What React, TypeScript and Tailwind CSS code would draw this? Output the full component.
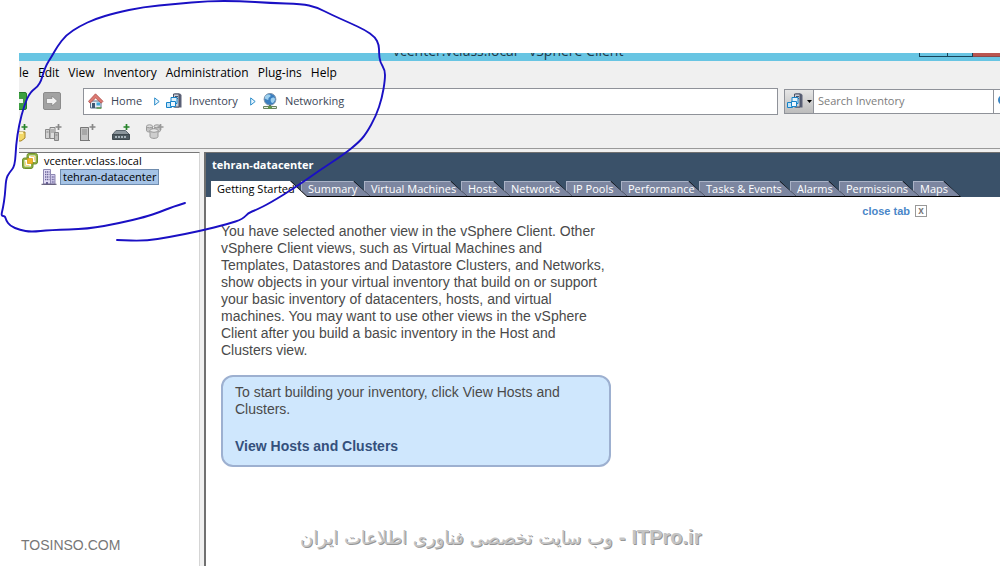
import { useState } from "react";

const menuItems = ["Edit", "View", "Inventory", "Administration", "Plug-ins", "Help"];

const tabs = [
  { label: "Getting Started", width: "w-[97px]" },
  { label: "Summary", width: "w-[70px]" },
  { label: "Virtual Machines", width: "w-[104px]" },
  { label: "Hosts", width: "w-[50px]" },
  { label: "Networks", width: "w-[69px]" },
  { label: "IP Pools", width: "w-[62px]" },
  { label: "Performance", width: "w-[85px]" },
  { label: "Tasks & Events", width: "w-[98px]" },
  { label: "Alarms", width: "w-[56px]" },
  { label: "Permissions", width: "w-[81px]" },
  { label: "Maps", width: "w-[48px]" },
];

function HomeIcon() {
  return (
    <svg className="h-4 w-4 shrink-0" viewBox="0 0 16 16">
      <path d="M2.500 8h10.500v7H2.500z" fill="#e6edf5" stroke="#56718f" />
      <path d="M7.500 .8 15 8.300l-1.800 1.900L7.700 5 2 10.200.5 8.300z" fill="#dc7a72" stroke="#b0524e" strokeWidth=".8" />
      <path d="M4 10h3v5H4z" fill="#3f5874" />
      <path d="M8.500 9.500h3.500v3H8.500z" fill="#3fa9dd" />
      <path d="M8.500 15h5" stroke="#5d9a4a" strokeWidth="1.500" />
    </svg>
  );
}

function InventoryIcon() {
  return (
    <svg className="h-4 w-4 shrink-0" viewBox="0 0 16 16">
      <path d="M8.500.5H14L15.500 2v12.500h-7z" fill="#5a6076" />
      <path d="M7.500 1H13v13H7.500z" fill="#c9ced8" stroke="#4b5266" />
      <path d="M9 3.500h3M9 5.500h3" stroke="#4b5266" />
      <path d="M5 4.500h6v6H5z" fill="#dff1fc" stroke="#1683c9" />
      <path d="M.5 9.500h5v5h-5z" fill="#bfe3f9" stroke="#1683c9" />
      <path d="M4.500 8.500h5v5h-5z" fill="#eef8ff" stroke="#1683c9" />
    </svg>
  );
}

function NetworkIcon() {
  return (
    <svg className="h-4 w-4 shrink-0" viewBox="0 0 16 16">
      <circle cx="8" cy="6.300" r="5.900" fill="#3b7fc0" stroke="#8195ab" />
      <path d="M3 3.500C5 1 8 1.200 8.500 2.500S6 4.500 6.500 6 4 6.500 3 5.500zM9 5.500c2-1.500 4-1 4 .8S11 10.500 10 10 8 7 9 5.500z" fill="#9dd0ef" />
      <path d="M8 12v2" stroke="#63735b" strokeWidth="2" />
      <path d="M1.500 13.500h13v2h-13z" fill="#e4eedd" stroke="#68805e" />
      <path d="M6 13.500h4v2H6z" fill="#5f9b45" />
    </svg>
  );
}

function Crumb() {
  return (
    <svg className="h-[9px] w-[6px] shrink-0" viewBox="0 0 6 9">
      <path d="M.7.900v7.200L5.200 4.500z" fill="#eaf7ff" stroke="#2c8cc9" />
    </svg>
  );
}

function ArrowIcon({ back = false }: { back?: boolean }) {
  return (
    <svg className="h-[18px] w-[18px]" viewBox="0 0 18 18">
      <rect x=".5" y=".5" width="17" height="17" rx="1.500" fill={back ? "#3aa040" : "#a2a2a2"} stroke={back ? "#257a2b" : "#8b8b8b"} />
      <path
        d={back ? "M14.500 6.500v5H9V14L3.500 9 9 4v2.500z" : "M3.500 6.500v5H9V14l5.500-5L9 4v2.500z"}
        fill={back ? "#e8f7e8" : "#f1f1f1"}
        stroke={back ? "#257a2b" : "#858585"}
        strokeWidth=".7"
      />
    </svg>
  );
}

function Plus({ color }: { color: string }) {
  return <path d="M14.500 0v6M11.500 3h6" stroke={color} strokeWidth="1.700" />;
}

function FolderIcon() {
  return (
    <svg className="h-[18px] w-[18px]" viewBox="0 0 18 18">
      <path d="M2 6h6l1 2h6v6l-4 3H2z" fill="#f3d868" stroke="#a98725" />
      <path d="M4 9h9" stroke="#fff3b5" strokeWidth="2" />
      <Plus color="#26832a" />
    </svg>
  );
}

function ClusterIcon() {
  return (
    <svg className="h-[18px] w-[18px]" viewBox="0 0 18 18">
      <path d="M1.500 5.500h4v9h-4z" fill="#d0d0d0" stroke="#8a8a8a" />
      <path d="M6 3.500h5v11H6z" fill="#dedede" stroke="#858585" />
      <path d="M10.500 8.500h4v8h-4z" fill="#bdbdbd" stroke="#858585" />
      <path d="M7 6h3M7 8h3M2.500 8h2M11.500 11h2" stroke="#888" />
      <Plus color="#888" />
    </svg>
  );
}

function HostIcon() {
  return (
    <svg className="h-[18px] w-[18px]" viewBox="0 0 18 18">
      <path d="M2.500 3.500h8v13h-8z" fill="#c4c4c4" stroke="#777" />
      <path d="M4 6h5M4 8h5M4 10h5" stroke="#8b8b8b" />
      <path d="M2 16.500h10" stroke="#777" />
      <Plus color="#888" />
    </svg>
  );
}

function SwitchIcon() {
  return (
    <svg className="h-[18px] w-[18px]" viewBox="0 0 18 18">
      <path d="M4 6.500h9.500l4 4H.5z" fill="#8b959c" stroke="#5b666e" />
      <path d="M.5 10.500h17v5H.5z" fill="#4d5960" stroke="#3e494f" />
      <path d="M3 13h2M6 13h2M9 13h2M12 13h2" stroke="#c6d2d9" strokeWidth="1.500" />
      <Plus color="#26832a" />
    </svg>
  );
}

function DatastoreIcon() {
  return (
    <svg className="h-[18px] w-[18px]" viewBox="0 0 18 18">
      <path d="M.5 2.500v4c0 2 6 2 6 0v-4M8.500 2.500v4c0 2 6 2 6 0v-4" fill="#c5c5c5" stroke="#999" />
      <ellipse cx="3.500" cy="2.300" rx="3" ry="1.500" fill="#ddd" stroke="#999" />
      <ellipse cx="11" cy="2.300" rx="3" ry="1.500" fill="#ddd" stroke="#999" />
      <path d="M4 6.500v6c0 2.500 8 2.500 8 0v-6" fill="#cecece" stroke="#999" />
      <ellipse cx="8" cy="6.500" rx="4" ry="1.800" fill="#e8e8e8" stroke="#999" />
      <Plus color="#999" />
    </svg>
  );
}

function VCenterIcon() {
  return (
    <svg className="h-4 w-4 shrink-0" viewBox="0 0 16 16">
      <rect x="5" y=".5" width="10.500" height="10.500" rx="2" fill="#8fb043" stroke="#6c8f2c" />
      <rect x=".5" y="5" width="10.500" height="10.500" rx="2" fill="#8fb043" stroke="#6c8f2c" />
      <rect x="7" y="2.500" width="6.500" height="6.500" rx=".5" fill="#fff" />
      <rect x="2.500" y="7" width="6.500" height="6.500" rx=".5" fill="#fff" />
      <path d="M5.500 5.500h5v5h-5z" fill="#f0b429" stroke="#d79a1c" strokeWidth=".8" />
      <path d="M8.500 3.500h4v4M3.500 8.500v4h4" fill="none" stroke="#f6d880" />
    </svg>
  );
}

function DatacenterIcon() {
  return (
    <svg className="h-4 w-4 shrink-0" viewBox="0 0 16 16">
      <path d="M2.500.5h7v14.500h-7z" fill="#e3def5" stroke="#8f89b3" />
      <path d="M9.500 5.500h4.500v9.500H9.500z" fill="#d5cfee" stroke="#8f89b3" />
      <path d="M4 3h4.500M4 5.500h4.500M4 8h4.500M4 10.500h4.500" stroke="#6c659a" strokeWidth="1.300" strokeDasharray="1.200 .6" />
      <path d="M10.800 8h2.500M10.800 10.500h2.500M10.800 13h2.500" stroke="#6c659a" strokeWidth="1.300" strokeDasharray="1 .6" />
      <path d="M5 13h2v2H5z" fill="#6c659a" />
      <path d="M.5 15.300h15" stroke="#4f4a68" />
    </svg>
  );
}

const penPoints = [
  [185, 203], [172, 207], [160, 212], [145, 217], [120, 223], [88, 229], [50, 230], [31, 232], [20, 230], [10, 226],
  [6, 220], [5, 216], [1, 216], [3, 208], [5, 195], [6, 179], [9, 173], [15, 166], [16, 145], [19, 125], [24, 106],
  [30, 92], [40, 85], [45, 67], [52, 56], [57, 47], [66, 35], [80, 26], [95, 19], [115, 13], [143, 7], [175, 4],
  [208, 1], [240, 1], [270, 3], [302, 4], [316, 7], [332, 15], [350, 23], [365, 30], [375, 37], [379, 45], [379, 53],
  [380, 62], [385, 70], [385, 80], [382, 98], [376, 116], [366, 134], [358, 143], [343, 155], [320, 170], [296, 187],
  [270, 203], [256, 210], [248, 213], [243, 219], [228, 224], [200, 231], [170, 237], [145, 241], [117, 240],
];

// curve through the midpoints so the line looks hand drawn
function smooth(points: number[][]) {
  let d = `M${points[0].join(" ")}`;
  for (let i = 1; i < points.length - 1; i++) {
    const [x, y] = points[i];
    const [nx, ny] = points[i + 1];
    d += `Q${x} ${y} ${(x + nx) / 2} ${(y + ny) / 2}`;
  }
  return d + `L${points[points.length - 1].join(" ")}`;
}

function PenMark() {
  return (
    <svg className="pointer-events-none absolute left-0 top-0 z-30 h-[250px] w-[400px]" viewBox="0 0 400 250" fill="none">
      <path d={smooth(penPoints)} stroke="#1a10c4" strokeWidth="1.900" strokeLinecap="round" strokeLinejoin="round" />
    </svg>
  );
}

export default function App() {
  const [active, setActive] = useState("Getting Started");

  return (
    <div className="relative flex min-h-screen flex-col overflow-hidden bg-white pl-[19px] pt-[53px] font-['Open_Sans',sans-serif] text-[11px] text-black">
      {/* Title bar */}
      <div className="flex h-2 items-end justify-end overflow-hidden bg-[#68c5e3]">
        <div className="flex-1 pb-[2px] pl-[374px] text-[14px] leading-4 text-[#1c3a4a]">vcenter.vclass.local - vSphere Client</div>
        <div className="flex h-full pb-1">
          <button aria-label="Minimize" className="w-7 border-b border-l border-[#17445a]" />
          <button aria-label="Maximize" className="w-[26px] border-b border-x border-[#17445a]" />
          <button aria-label="Close" className="w-[27px] border-b border-[#8a4a4a] bg-[#b9554f]" />
        </div>
      </div>

      <header className="border-b border-[#9a9a9a] bg-[#f0f0f0]">
        <nav className="flex h-[23px] items-center gap-[9px] pt-px text-[12px]">
          <button aria-label="File" className="w-[10px] text-left">le</button>
          {menuItems.map((m) => (
            <button key={m}>{m}</button>
          ))}
        </nav>

        <div className="flex h-[34px] items-center">
          <div className="flex w-16 shrink-0 gap-4 overflow-hidden">
            <button aria-label="Back" className="flex w-2 justify-end">
              <span className="shrink-0"><ArrowIcon back /></span>
            </button>
            <button aria-label="Forward"><ArrowIcon /></button>
          </div>
          <div className="flex h-[27px] flex-1 items-center border border-[#8f9299] bg-white pl-1 text-[#3b4657]">
            <HomeIcon />
            <a href="#home" className="ml-[7px] mr-3">Home</a>
            <Crumb />
            <span className="ml-1.5"><InventoryIcon /></span>
            <a href="#inventory" className="ml-[7px] mr-3">Inventory</a>
            <Crumb />
            <span className="ml-1.5"><NetworkIcon /></span>
            <a href="#networking" className="ml-[7px]">Networking</a>
          </div>
          <div className="ml-[6px] flex h-[25px] w-[216px] border-y border-l border-[#8f9299] bg-white">
            <button aria-label="Search scope" className="flex w-[29px] items-center justify-center gap-1 border-r border-[#8f9299] bg-linear-to-b from-[#e6e6e6] to-[#bcbcbc]">
              <InventoryIcon />
              <svg className="h-[3px] w-[5px]" viewBox="0 0 5 3"><path d="M0 0h5L2.500 3z" /></svg>
            </button>
            <input aria-label="Search Inventory" placeholder="Search Inventory" className="min-w-0 flex-1 px-1 outline-none placeholder:text-[#7c7c7c]" />
            <button aria-label="Search" className="w-[7px] overflow-hidden border-l border-[#8f9299]">
              <svg className="ml-[3px] h-3 w-3" viewBox="0 0 12 12"><circle cx="6" cy="5" r="4" fill="none" stroke="#3b86c4" strokeWidth="2" /></svg>
            </button>
          </div>
        </div>

        <div className="flex h-[30px] items-center overflow-hidden">
          <button aria-label="New folder" className="flex w-[9px] justify-end">
            <span className="shrink-0"><FolderIcon /></span>
          </button>
          <button aria-label="New cluster" className="ml-4"><ClusterIcon /></button>
          <button aria-label="Add host" className="ml-4"><HostIcon /></button>
          <button aria-label="Add switch" className="ml-4"><SwitchIcon /></button>
          <button aria-label="Add datastore" className="ml-4"><DatastoreIcon /></button>
        </div>
      </header>

      <div className="flex flex-1 bg-[#f0f0f0] pt-[3px]">
        {/* Inventory tree */}
        <aside className="w-[181px] shrink-0 border-r border-t border-r-[#d5d5d5] border-t-[#777] bg-white">
          <div className="flex h-4 items-center gap-[6px] pl-[3px]">
            <VCenterIcon />
            <button>vcenter.vclass.local</button>
          </div>
          <div className="flex h-4 items-center gap-[3px] pl-[22px]">
            <DatacenterIcon />
            <button className="border border-[#6f8cae] bg-[#a5c3e6] px-[2px] leading-[14px]">tehran-datacenter</button>
          </div>
        </aside>

        <main className="ml-1 flex min-w-0 flex-1 flex-col border-l-2 border-t border-[#707070] bg-white">
          <div className="flex h-11 flex-col justify-between bg-[#3a5169] pl-[5px]">
            <h1 className="pl-px pt-1 font-bold leading-4 text-white">tehran-datacenter</h1>
            <div role="tablist" className="flex h-4">
              {tabs.map((t, i) => (
                <button
                  key={t.label}
                  role="tab"
                  aria-selected={active === t.label}
                  onClick={() => setActive(t.label)}
                  style={{ zIndex: tabs.length - i }}
                  className={`relative mr-[-7px] flex h-4 shrink-0 items-start bg-black pr-px [clip-path:polygon(0_0,calc(100%-17px)_0,100%_100%,0_100%)] ${t.width}`}
                >
                  <span
                    className={`w-full whitespace-nowrap pl-[6px] text-left [clip-path:polygon(0_0,calc(100%-17px)_0,100%_100%,0_100%)] ${
                      active === t.label
                        ? "h-4 bg-white leading-4 text-black"
                        : "h-[15px] border-l border-t border-[#a9b2c6] bg-[#7c86a0] leading-[14px] text-white"
                    }`}
                  >
                    {t.label}
                  </span>
                </button>
              ))}
            </div>
          </div>

          <div className="flex items-center justify-end gap-[5px] pr-[73px] pt-2 font-['Liberation_Sans',sans-serif]">
            <a href="#close" className="font-bold leading-3 text-[#4a86c8]">close tab</a>
            <button aria-label="Close tab" className="flex h-3 w-3 items-center justify-center border border-[#999] text-[10px] font-bold leading-none text-[#777]">x</button>
          </div>

          <div className="w-[405px] pl-[15px] pt-[6px] font-['Liberation_Sans',sans-serif] text-[14px] leading-[17px] text-[#4a4a4a]">
            <p className="whitespace-nowrap">
              You have selected another view in the vSphere Client. Other<br />
              vSphere Client views, such as Virtual Machines and<br />
              Templates, Datastores and Datastore Clusters, and Networks,<br />
              show objects in your virtual inventory that build on or support<br />
              your basic inventory of datacenters, hosts, and virtual<br />
              machines. You may want to use other views in the vSphere<br />
              Client after you build a basic inventory in the Host and<br />
              Clusters view.
            </p>
            <div className="mt-4 rounded-xl border-2 border-[#9db0d0] bg-[#cfe7fd] px-3 pb-[10px] pt-[7px]">
              <p>To start building your inventory, click View Hosts and Clusters.</p>
              <a href="#hosts" className="mt-5 block font-bold text-[#34507c]">View Hosts and Clusters</a>
            </div>
          </div>
        </main>
      </div>

      {/* Watermarks */}
      <div className="absolute bottom-[12px] left-[21px] font-['Liberation_Sans',sans-serif] text-[14px] leading-[18px] text-[#777]">TOSINSO.COM</div>
      <div dir="rtl" className="absolute bottom-[14px] left-[300px] flex items-baseline gap-[6px] whitespace-nowrap font-['Liberation_Sans','DejaVu_Sans',sans-serif] text-[20px] font-bold leading-7 text-[#c4c4c4] [text-shadow:1px_1px_0_#969696]">
        <span>ITPro.ir</span>
        <span>-</span>
        <span className="font-['DejaVu_Sans',sans-serif] text-[18px] font-normal">وب سایت تخصصی فناوری اطلاعات ایران</span>
      </div>

      <PenMark />
    </div>
  );
}
